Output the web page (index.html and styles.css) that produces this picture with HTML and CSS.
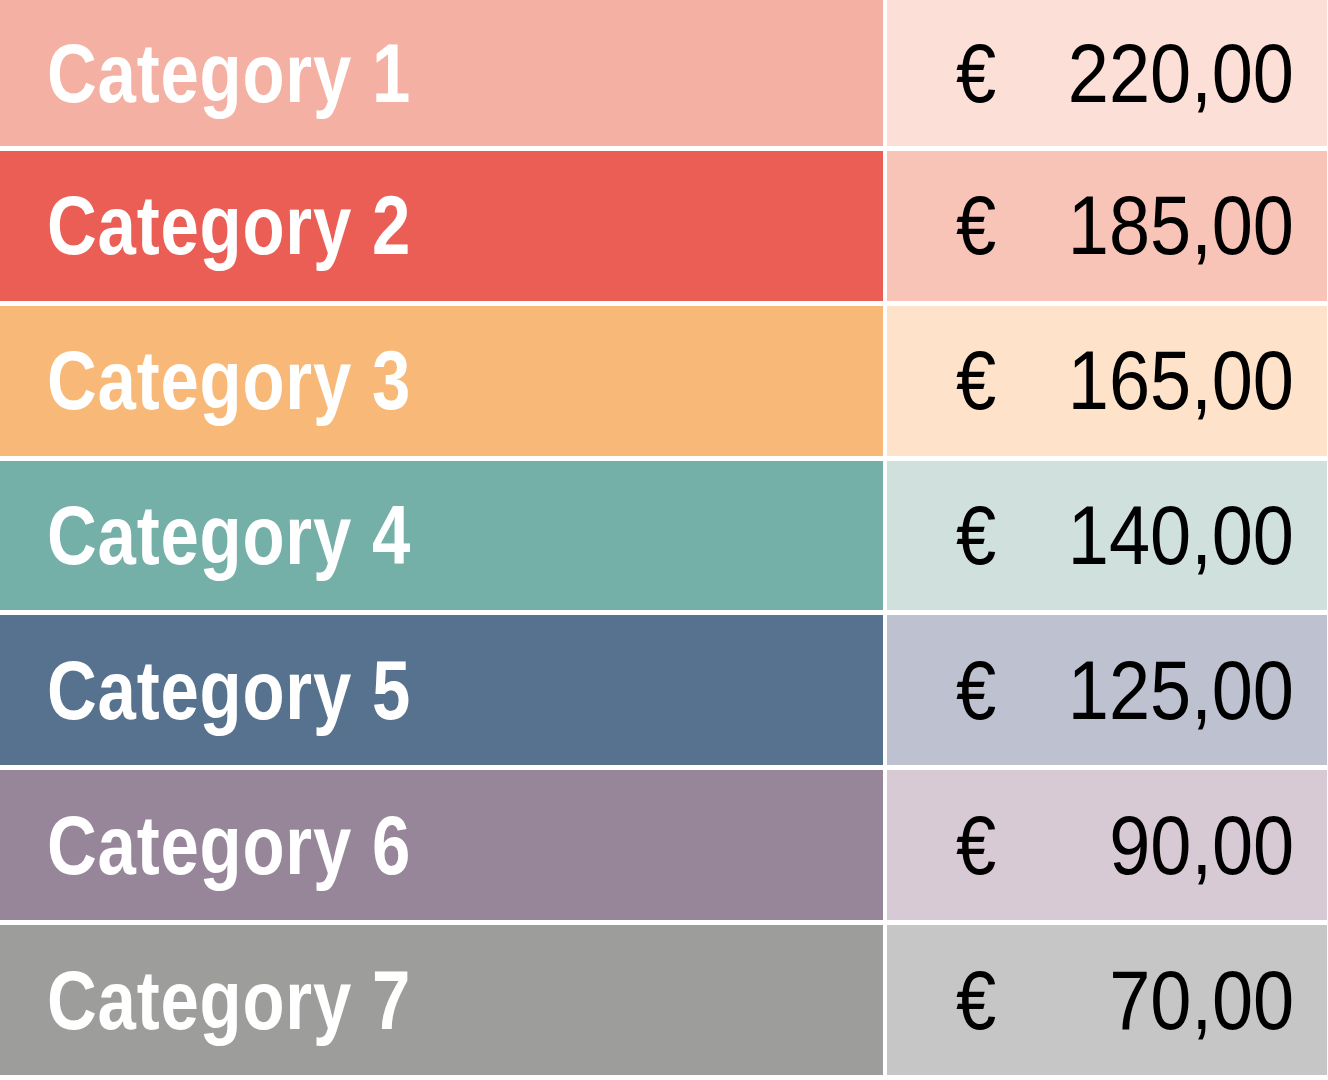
FILE: index.html
```html
<!DOCTYPE html>
<html lang="en">
<head>
    <meta charset="UTF-8">
    <title>Categories</title>
    <link rel="stylesheet" href="styles.css">
</head>
<body>
    <div class="table">
        <div class="label c1"><span class="name">Category 1</span></div>
        <div class="value c1">
            <span class="euro">€</span><span class="amount">220,00</span>
        </div>
        <div class="label c2"><span class="name">Category 2</span></div>
        <div class="value c2">
            <span class="euro">€</span><span class="amount">185,00</span>
        </div>
        <div class="label c3"><span class="name">Category 3</span></div>
        <div class="value c3">
            <span class="euro">€</span><span class="amount">165,00</span>
        </div>
        <div class="label c4"><span class="name">Category 4</span></div>
        <div class="value c4">
            <span class="euro">€</span><span class="amount">140,00</span>
        </div>
        <div class="label c5"><span class="name">Category 5</span></div>
        <div class="value c5">
            <span class="euro">€</span><span class="amount">125,00</span>
        </div>
        <div class="label c6"><span class="name">Category 6</span></div>
        <div class="value c6">
            <span class="euro">€</span><span class="amount">90,00</span>
        </div>
        <div class="label c7"><span class="name">Category 7</span></div>
        <div class="value c7">
            <span class="euro">€</span><span class="amount">70,00</span>
        </div>
    </div>
</body>
</html>
```
FILE: styles.css
```css
body {
    margin: 0;
    background: #ffffff;
    font-family: "Liberation Sans", Arial, sans-serif;
}
.table {
    display: grid;
    grid-template-columns: 883px 440px;
    grid-template-rows: 146px repeat(6, 1fr);
    column-gap: 4px;
    row-gap: 5px;
    height: 1075px;
}
.label {
    display: flex;
    align-items: center;
    padding-left: 47px;
    color: #ffffff;
    font-size: 84px;
    font-weight: bold;
}
.name {
    display: inline-block;
    white-space: nowrap;
    letter-spacing: 1px;
    transform: scaleX(0.82);
    transform-origin: left center;
}
.value {
    display: flex;
    align-items: center;
    justify-content: space-between;
    padding: 0 33px 0 69px;
    color: #000000;
    font-size: 84px;
}
.euro {
    display: inline-block;
    transform: scaleX(0.86);
    transform-origin: left center;
}
.amount {
    display: inline-block;
    transform: scaleX(0.88);
    transform-origin: right center;
}
.label.c1 { background: #f4b0a3; }
.value.c1 { background: #fce0d8; }
.label.c2 { background: #eb5e55; }
.value.c2 { background: #f8c4b8; }
.label.c3 { background: #f8b878; }
.value.c3 { background: #fee3ca; }
.label.c4 { background: #74afa8; }
.value.c4 { background: #cfe0dd; }
.label.c5 { background: #56728f; }
.value.c5 { background: #bec1d0; }
.label.c6 { background: #978599; }
.value.c6 { background: #d8cad4; }
.label.c7 { background: #9d9d9b; }
.value.c7 { background: #c6c6c6; }
```
